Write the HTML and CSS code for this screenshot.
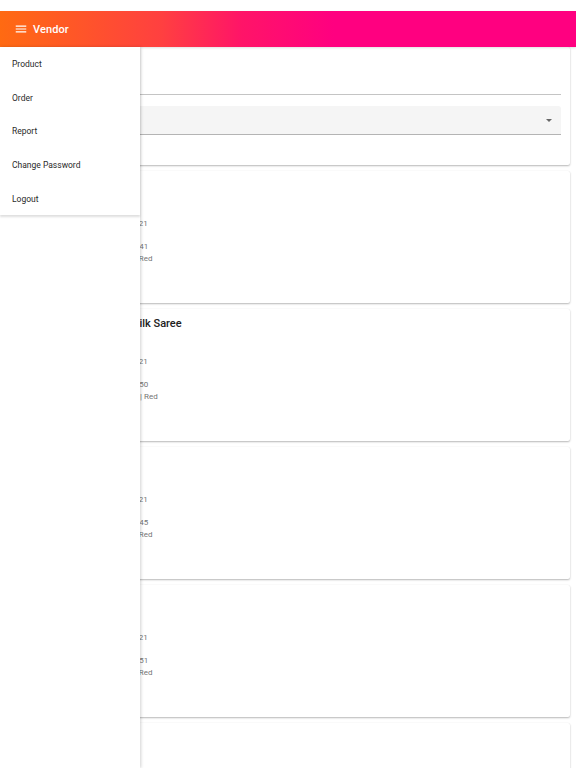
FILE: index.html
```html
<!DOCTYPE html>
<html>
<head>
<meta charset="utf-8">
<link rel="stylesheet" href="styles.css">
</head>
<body>
<div class="statusbar"></div>
<header class="appbar">
  <svg class="menu-icon" viewBox="0 0 24 24" width="14" height="14"><path d="M3 6h18v2H3zM3 11h18v2H3zM3 16h18v2H3z" fill="#fff"/></svg>
  <span class="appbar-title">Vendor</span>
</header>
<main class="content">
  <section class="card filter-card">
    <div class="text-field"><span class="label">Search Order</span></div>
    <div class="select-field"><span class="label">Status</span><span class="caret"></span></div>
  </section>
  <article class="card order">
    <div class="thumb"></div>
    <div class="info">
      <div class="title">Lehenga</div>
      <div class="line first">No: 1021</div>
      <div class="line date">Date: 12-03-2021</div>
      <div class="line">Qty: 1</div>
      <div class="line">Amount: Rs 1441</div>
      <div class="line">Size: Regular | Red</div>
    </div>
  </article>
  <article class="card order">
    <div class="thumb"></div>
    <div class="info">
      <div class="title">Banarasi Silk Saree</div>
      <div class="line first">No: 1022</div>
      <div class="line date">Date: 14-03-2021</div>
      <div class="line">Qty: 2</div>
      <div class="line">Amount: Rs 2650</div>
      <div class="line">Size: Free Size | Red</div>
    </div>
  </article>
  <article class="card order">
    <div class="thumb"></div>
    <div class="info">
      <div class="title">Kurti</div>
      <div class="line first">No: 1023</div>
      <div class="line date">Date: 15-03-2021</div>
      <div class="line">Qty: 1</div>
      <div class="line">Amount: Rs 1245</div>
      <div class="line">Size: Regular | Red</div>
    </div>
  </article>
  <article class="card order">
    <div class="thumb"></div>
    <div class="info">
      <div class="title">Dupatta</div>
      <div class="line first">No: 1024</div>
      <div class="line date">Date: 18-03-2021</div>
      <div class="line">Qty: 1</div>
      <div class="line">Amount: Rs 1351</div>
      <div class="line">Size: Regular | Red</div>
    </div>
  </article>
  <article class="card order">
    <div class="thumb"></div>
    <div class="info">
      <div class="title">Shawl</div>
    </div>
  </article>
</main>
<nav class="drawer">
  <a class="drawer-item">Product</a>
  <a class="drawer-item">Order</a>
  <a class="drawer-item">Report</a>
  <a class="drawer-item">Change Password</a>
  <a class="drawer-item">Logout</a>
</nav>
</body>
</html>
```
FILE: styles.css
```css
* { box-sizing: border-box; }
html, body { margin: 0; padding: 0; }
body {
  font-family: Roboto, "Liberation Sans", sans-serif;
  background: #fff;
  width: 576px;
  height: 768px;
  overflow: hidden;
  position: relative;
}
.statusbar { height: 11px; background: #fff; }
.appbar {
  height: 36px;
  display: flex;
  align-items: center;
  padding-left: 14px;
  gap: 5px;
  background: linear-gradient(90deg, #ff6a12 0%, #ff4040 28%, #ff1468 42%, #ff0080 58%, #ff0080 100%);
  color: #fff;
  box-shadow: 0 1px 2px rgba(0,0,0,0.12);
  position: relative;
  z-index: 2;
}
.menu-icon { display: block; }
.appbar-title { font-size: 11px; font-weight: 500; letter-spacing: 0.1px; }

.content {
  padding: 0 6px;
  display: flex;
  flex-direction: column;
  gap: 6px;
}
.card {
  background: #fff;
  border-radius: 2px;
  box-shadow: 0 1px 2px rgba(0,0,0,0.28), 0 0 1px rgba(0,0,0,0.08);
}
.filter-card {
  height: 118px;
  padding: 0 9px 0 10px;
  display: flex;
  flex-direction: column;
}
.text-field {
  height: 48px;
  border-bottom: 1px solid #c4c4c4;
  display: flex;
  align-items: flex-end;
  padding-bottom: 8px;
}
.label { font-size: 10px; color: #9e9e9e; }
.select-field {
  margin-top: 11px;
  height: 29px;
  background: #f5f5f5;
  border-bottom: 1px solid #b4b4b4;
  border-radius: 3px 3px 0 0;
  display: flex;
  align-items: center;
  justify-content: space-between;
  padding: 0 9px 0 8px;
}
.caret {
  width: 0; height: 0;
  border-left: 3.5px solid transparent;
  border-right: 3.5px solid transparent;
  border-top: 3.5px solid #666;
  margin-top: 1px;
}
.order {
  height: 132px;
  display: flex;
  padding: 8px 10px;
  gap: 10px;
}
.thumb { width: 61px; height: 100px; background: #eee; }
.info { display: flex; flex-direction: column; }
.title { font-size: 11px; font-weight: 500; color: #212121; line-height: 14px; }
.line { font-size: 8px; color: #757575; line-height: 11.4px; white-space: nowrap; }
.line.first { margin-top: 6.3px; }
.line.date { margin-top: 7.6px; }

.drawer {
  position: absolute;
  top: 47px;
  left: 0;
  bottom: 0;
  width: 140px;
  background: #fff;
  box-shadow: 1px 0 3px rgba(0,0,0,0.18);
  z-index: 3;
  display: flex;
  flex-direction: column;
}
.drawer-item {
  height: 33.6px;
  display: flex;
  align-items: center;
  padding-left: 12px;
  padding-top: 1px;
  font-size: 8.5px;
  color: #2a2a2a;
  background: #fff;
  box-shadow: 0 1.5px 2px rgba(0,0,0,0.13);
  position: relative;
}
```
